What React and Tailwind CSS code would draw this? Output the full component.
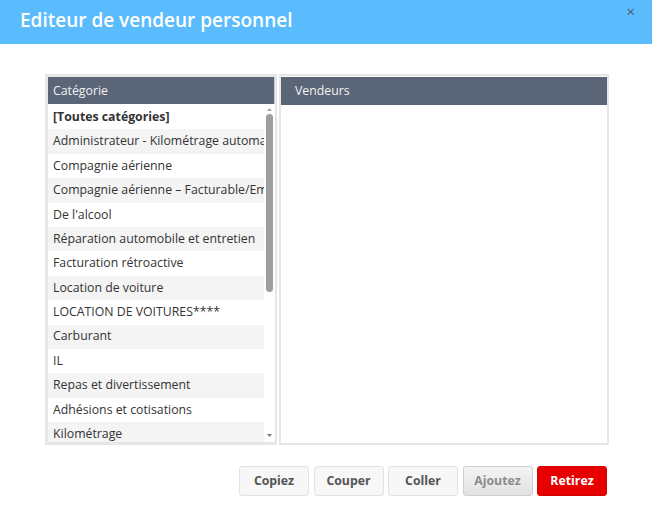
const categories = [
  '[Toutes catégories]',
  'Administrateur - Kilométrage automatique',
  'Compagnie aérienne',
  'Compagnie aérienne – Facturable/Employé',
  "De l'alcool",
  'Réparation automobile et entretien',
  'Facturation rétroactive',
  'Location de voiture',
  'LOCATION DE VOITURES****',
  'Carburant',
  'IL',
  'Repas et divertissement',
  'Adhésions et cotisations',
  'Kilométrage',
  'Fournitures de bureau',
];

const font = { fontFamily: '"Open Sans", "Noto Sans", sans-serif' };

function Button({ children, variant }) {
  const styles =
    variant === 'danger'
      ? 'bg-[#e60000] border-[#d40000] text-white'
      : variant === 'disabled'
      ? 'bg-gradient-to-b from-[#f4f4f4] to-[#e2e2e2] border-[#cfcfcf] text-[#8c8c8c]'
      : 'bg-[#f7f7f7] border-[#e3e3e3] text-[#555]';
  return (
    <button className={`w-[70px] h-[30px] rounded-[3px] border text-[12.3px] font-bold ${styles}`}>
      {children}
    </button>
  );
}

export default function App() {
  return (
    <div className="w-[652px] h-[525px] bg-white" style={font}>
      <div className="relative h-[44px] bg-[#5bbcfd] flex items-center pl-5">
        <h1 className="text-white text-[19px] font-semibold leading-none pb-[4px]">Editeur de vendeur personnel</h1>
        <span className="absolute right-[17px] top-[3px] text-[#4f5a68] text-[15px] leading-[16px]">×</span>
      </div>

      <div className="flex pl-[45px] pt-[30px] gap-[2px]">
        <div className="w-[232px] h-[371px] border-[3px] border-r-2 border-[#e6e6e6] flex flex-col">
          <div className="h-[27px] bg-[#5a6577] border-r border-[#c9ced6] text-[#f2f2f2] text-[12.3px] flex items-center px-[5px] pt-px">
            Catégorie
          </div>
          <div className="relative flex-1 overflow-hidden">
            <div className="mr-[11px] pt-px">
              {categories.map((c, i) => (
                <div
                  key={c}
                  className={`h-[24.4px] flex items-center px-[5px] text-[12.3px] text-[#333] whitespace-nowrap overflow-hidden ${
                    i % 2 === 1 ? 'bg-[#f4f4f4]' : 'bg-white'
                  } ${i === 0 ? 'font-bold' : ''}`}
                >
                  {c}
                </div>
              ))}
            </div>
            <div className="absolute right-0 top-0 bottom-0 w-[11px] bg-white flex flex-col items-center">
              <svg width="7" height="5" viewBox="0 0 7 5" className="mt-[3px]">
                <path d="M3.5 1 L6 4 L1 4 Z" fill="#a3a3a3" />
              </svg>
              <div className="mt-[2px] w-[7px] h-[178px] rounded-full bg-[#9e9e9e]" />
              <div className="flex-1" />
              <svg width="7" height="5" viewBox="0 0 7 5" className="mb-[4px]">
                <path d="M1 1 L6 1 L3.5 4 Z" fill="#7a7a7a" />
              </svg>
            </div>
          </div>
        </div>

        <div className="w-[330px] h-[371px] border-2 border-[#e6e6e6] flex flex-col">
          <div className="h-[28px] mt-px bg-[#5a6577] text-[#f2f2f2] text-[12.3px] flex items-center px-[14px] pt-px">
            Vendeurs
          </div>
          <div className="flex-1 bg-white" />
        </div>
      </div>

      <div className="flex justify-end gap-[4.5px] pr-[45px] pt-[21px]">
        <Button>Copiez</Button>
        <Button>Couper</Button>
        <Button>Coller</Button>
        <Button variant="disabled">Ajoutez</Button>
        <Button variant="danger">Retirez</Button>
      </div>
    </div>
  );
}
